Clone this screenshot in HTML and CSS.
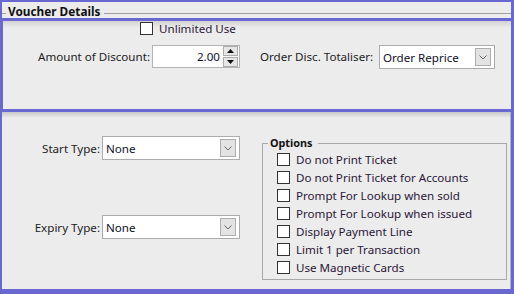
FILE: index.html
```html
<!DOCTYPE html>
<html>
<head>
<meta charset="utf-8">
<link rel="stylesheet" href="styles.css">
</head>
<body>
<div class="frame">
  <div class="title-row">
    <span class="tick"></span>
    <span class="title">Voucher Details</span>
    <span class="rule"></span>
  </div>
  <div class="hbox">
    <div class="check-row top-check"><span class="cb"></span><span class="cb-text">Unlimited Use</span></div>
    <div class="field-row amount-row">
      <span class="lbl lbl-amount">Amount of Discount:</span>
      <div class="spin">
        <span class="spin-val">2.00</span>
        <span class="spin-btns">
          <span class="sb"><svg width="7" height="4" viewBox="0 0 7 4"><polygon points="0,4 7,4 3.5,0" fill="#111"/></svg></span>
          <span class="sb"><svg width="7" height="4" viewBox="0 0 7 4"><polygon points="0,0 7,0 3.5,4" fill="#111"/></svg></span>
        </span>
      </div>
      <span class="lbl lbl-total">Order Disc. Totaliser:</span>
      <div class="combo combo-total">
        <span class="combo-val">Order Reprice</span>
        <span class="drop"><svg width="8" height="5" viewBox="0 0 8 5"><polyline points="0.5,0.5 4,4 7.5,0.5" fill="none" stroke="#666" stroke-width="1"/></svg></span>
      </div>
    </div>
  </div>
  <div class="lower">
    <div class="left-col">
      <div class="field-row">
        <span class="lbl lbl-type">Start Type:</span>
        <div class="combo combo-type">
          <span class="combo-val">None</span>
          <span class="drop"><svg width="8" height="5" viewBox="0 0 8 5"><polyline points="0.5,0.5 4,4 7.5,0.5" fill="none" stroke="#666" stroke-width="1"/></svg></span>
        </div>
      </div>
      <div class="field-row expiry-row">
        <span class="lbl lbl-type">Expiry Type:</span>
        <div class="combo combo-type">
          <span class="combo-val">None</span>
          <span class="drop"><svg width="8" height="5" viewBox="0 0 8 5"><polyline points="0.5,0.5 4,4 7.5,0.5" fill="none" stroke="#666" stroke-width="1"/></svg></span>
        </div>
      </div>
    </div>
    <fieldset class="options">
      <legend>Options</legend>
      <div class="check-row opt first-opt"><span class="cb"></span><span class="cb-text">Do not Print Ticket</span></div>
      <div class="check-row opt"><span class="cb"></span><span class="cb-text">Do not Print Ticket for Accounts</span></div>
      <div class="check-row opt"><span class="cb"></span><span class="cb-text">Prompt For Lookup when sold</span></div>
      <div class="check-row opt"><span class="cb"></span><span class="cb-text">Prompt For Lookup when issued</span></div>
      <div class="check-row opt"><span class="cb"></span><span class="cb-text">Display Payment Line</span></div>
      <div class="check-row opt"><span class="cb"></span><span class="cb-text">Limit 1 per Transaction</span></div>
      <div class="check-row opt"><span class="cb"></span><span class="cb-text">Use Magnetic Cards</span></div>
    </fieldset>
  </div>
</div>
</body>
</html>
```
FILE: styles.css
```css
html, body {
  margin: 0;
  padding: 0;
  width: 514px;
  height: 294px;
  overflow: hidden;
}
body {
  font-family: "Noto Sans", "DejaVu Sans", sans-serif;
  font-size: 11.6px;
  color: #1c1c1c;
}
.frame {
  box-sizing: border-box;
  width: 514px;
  height: 294px;
  background: #ececec;
  border-style: solid;
  border-color: #6868d0;
  border-width: 2px 3px 5px 2px;
  display: flex;
  flex-direction: column;
}
.title-row {
  height: 16px;
  flex: none;
  display: flex;
  align-items: flex-start;
}
.tick {
  width: 4px;
  margin-top: 11px;
  border-top: 1px solid #a0a0a0;
}
.title {
  font-weight: bold;
  font-size: 11.8px;
  line-height: 16px;
  margin-top: 1px;
  margin-left: 2px;
  color: #111;
  white-space: nowrap;
}
.rule {
  flex: 1;
  margin-top: 11px;
  margin-left: 4px;
  border-top: 1px solid #a0a0a0;
}
.hbox {
  flex: none;
  box-sizing: border-box;
  height: 94px;
  margin: 0 -3px 0 -2px;
  border: 3px solid #6868d0;
  background: linear-gradient(#d2d2d2, #ececec 7px);
}
.check-row {
  display: flex;
  align-items: center;
  gap: 6px;
}
.cb {
  box-sizing: border-box;
  width: 13px;
  height: 13px;
  border: 1px solid #333;
  background: #fff;
  flex: none;
}
.cb-text {
  color: #2a1738;
  white-space: nowrap;
}
.top-check {
  margin: 1px 0 0 137px;
  height: 13px;
}
.field-row {
  display: flex;
  align-items: center;
}
.amount-row {
  margin-top: 10px;
  align-items: flex-start;
}
.lbl {
  white-space: nowrap;
  text-align: right;
  flex: none;
}
.amount-row .lbl {
  line-height: 23px;
}
.lbl-amount {
  width: 147px;
  margin-right: 2px;
}
.lbl-total {
  width: 113px;
  margin: 0 6px 0 20px;
}
.spin {
  box-sizing: border-box;
  width: 88px;
  height: 23px;
  border: 1px solid #b4b4b4;
  background: #fff;
  display: flex;
  align-items: center;
  padding-right: 1px;
  color: #10102a;
}
.spin-val {
  flex: 1;
  text-align: right;
  padding-right: 3px;
}
.spin-btns {
  width: 15px;
  height: 21px;
  display: flex;
  flex-direction: column;
  gap: 1px;
}
.sb {
  box-sizing: border-box;
  flex: 1;
  border: 1px solid #acacac;
  background: #e6e6e6;
  display: flex;
  align-items: center;
  justify-content: center;
}
.sb svg {
  display: block;
}
.combo {
  box-sizing: border-box;
  height: 24px;
  border: 1px solid #acacac;
  background: #fff;
  display: flex;
  align-items: center;
  padding: 0 3px;
  color: #10102a;
}
.combo-total {
  width: 116px;
}
.combo-val {
  flex: 1;
  white-space: nowrap;
}
.drop {
  box-sizing: border-box;
  width: 16px;
  height: 18px;
  border: 1px solid #adadad;
  background: #e3e3e3;
  display: flex;
  align-items: center;
  justify-content: center;
}
.drop svg {
  display: block;
}
.lower {
  flex: 1;
  display: flex;
  align-items: flex-start;
  background: linear-gradient(#c8c8c8, #ececec 6px);
  border-right: 1px solid #b4b4b4;
}
.left-col {
  width: 238px;
  flex: none;
  padding-top: 24px;
}
.lbl-type {
  width: 98px;
  margin-right: 2px;
}
.combo-type {
  width: 138px;
}
.expiry-row {
  margin-top: 55px;
}
.options {
  flex: 1;
  margin: 23px 3px 0 22px;
  padding: 0 0 3px 5px;
  border: 1px solid #a8a8a8;
  min-width: 0;
}
.options legend {
  font-weight: bold;
  font-size: 10.8px;
  line-height: 16px;
  padding: 0 6px 0 2px;
  color: #111;
}
.opt {
  height: 18px;
  margin-left: 9px;
}
.first-opt {
  margin-top: -1px;
}
```
